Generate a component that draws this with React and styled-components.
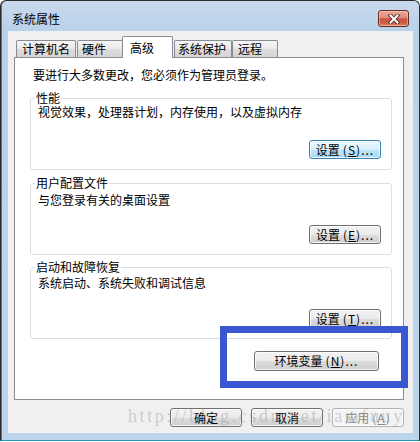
import React from 'react';
import styled, { createGlobalStyle } from 'styled-components';

const GlobalStyle = createGlobalStyle`
  html, body {
    margin: 0;
    padding: 0;
    background: #ffffff;
  }
  body {
    font-family: "Noto Sans CJK SC", "Liberation Sans", sans-serif;
    font-size: 12px;
    color: #000000;
  }
`;

const Window = styled.div`
  position: relative;
  width: 420px;
  height: 441px;
  box-sizing: border-box;
  display: flex;
  flex-direction: column;
  border: 1px solid #2c2c2c;
  border-bottom-color: #2a93b8;
  border-radius: 6px 6px 0 0;
  background: linear-gradient(#c9daed 0, #b9d1ea 30px, #bcd5ed 100%);
  box-shadow: inset 1px 0 0 #5d6f82;
  overflow: hidden;
`;

const TitleBar = styled.div`
  height: 30px;
  display: flex;
  align-items: flex-start;
  justify-content: space-between;
  padding: 0 10px 0 11px;
`;

const Title = styled.div`
  margin-top: 11px;
  line-height: 14px;
  color: #000000;
`;

const CloseButton = styled.div`
  margin-top: 9px;
  width: 31px;
  height: 17px;
  box-sizing: border-box;
  display: flex;
  align-items: center;
  justify-content: center;
  border: 1px solid #6b2a22;
  border-radius: 3px;
  background: linear-gradient(#eaaa9c 0%, #dc8b7b 45%, #c75340 52%, #cc5f48 80%, #e08a6c 100%);
  box-shadow: inset 0 0 0 1px rgba(255, 220, 210, 0.45);
`;

const Client = styled.div`
  height: 402px;
  margin: 0 6px 0 7px;
  box-sizing: border-box;
  padding: 5px 9px 0 6px;
  background: #f0f0f0;
  display: flex;
  flex-direction: column;
`;

const TabStrip = styled.div`
  position: relative;
  z-index: 1;
  height: 22px;
  margin-bottom: -1px;
  padding-left: 2px;
  display: flex;
  align-items: flex-end;
`;

const Tab = styled.div`
  box-sizing: border-box;
  width: ${p => p.$w}px;
  height: ${p => (p.$active ? 22 : 17)}px;
  margin-left: ${p => p.$ml || 0}px;
  margin-bottom: ${p => (p.$active ? 0 : 1)}px;
  padding-left: ${p => p.$pad}px;
  display: flex;
  align-items: center;
  border: 1px solid #898c95;
  border-bottom: none;
  border-radius: 2px 2px 0 0;
  background: ${p => (p.$active ? '#ffffff' : 'linear-gradient(#f6f6f6, #e9e9e9 50%, #dddddd 51%, #d5d5d5)')};
  position: relative;
  z-index: ${p => (p.$active ? 2 : 1)};
  line-height: 14px;
  white-space: nowrap;
  overflow: hidden;
`;

const Panel = styled.div`
  height: 343px;
  box-sizing: border-box;
  border: 1px solid #898c95;
  background: #ffffff;
  padding: 10px 11px 0 15px;
  display: flex;
  flex-direction: column;
`;

const Intro = styled.div`
  margin-left: 3px;
  line-height: 14px;
`;

const Group = styled.fieldset`
  margin: ${p => p.$mt}px 0 0 0;
  padding: 0 10px 10px 7px;
  min-width: 0;
  border: 1px solid #d5dfe5;
  border-radius: 3px;
  display: flex;
  flex-direction: column;
`;

const Legend = styled.legend`
  margin-left: -3px;
  padding: 0 1px;
  line-height: 12px;
`;

const Desc = styled.div`
  margin-top: ${p => p.$mt}px;
  line-height: 14px;
`;

const ButtonRow = styled.div`
  margin-top: ${p => p.$mt}px;
  display: flex;
  justify-content: flex-end;
`;

const Button = styled.button`
  box-sizing: border-box;
  width: ${p => p.$w || 72}px;
  height: ${p => p.$h || 19}px;
  padding: 0;
  font-family: inherit;
  font-size: 12px;
  line-height: 16px;
  color: ${p => (p.disabled ? '#8b8b8b' : '#000000')};
  border: 1px solid ${p => (p.$hot ? '#3c7fb1' : p.disabled ? '#adb2b5' : '#707070')};
  border-radius: 3px;
  background: ${p =>
    p.$hot
      ? 'linear-gradient(#eaf6fd 0%, #d9f0fc 50%, #bee6fd 51%, #a7d9f5 100%)'
      : p.disabled
      ? '#f4f4f4'
      : 'linear-gradient(#f2f2f2 0%, #ebebeb 50%, #dddddd 51%, #cfcfcf 100%)'};
  box-shadow: inset 0 0 0 1px rgba(255, 255, 255, 0.75);
  white-space: nowrap;
`;

const Access = styled.span`
  margin-left: 3px;
  letter-spacing: 1px;

  u {
    text-decoration-thickness: 1px;
    text-underline-offset: 1px;
  }
`;

const EnvRow = styled.div`
  margin: 12px 13px 0 0;
  display: flex;
  justify-content: flex-end;
`;

const Footer = styled.div`
  margin-top: 8px;
  display: flex;
  justify-content: flex-end;
  gap: 9px;
`;

const Watermark = styled.div`
  position: absolute;
  left: 127px;
  top: 405px;
  font-family: "Liberation Serif", serif;
  font-size: 18px;
  letter-spacing: 2.6px;
  color: rgba(140, 140, 140, 0.38);
  white-space: nowrap;
  pointer-events: none;
`;

const Highlight = styled.div`
  position: absolute;
  left: 219px;
  top: 325px;
  width: 188px;
  height: 62px;
  box-sizing: border-box;
  border: 7px solid #3a57d2;
  pointer-events: none;
`;

const tabs = [
  { label: '计算机名', w: 60, ml: 0, pad: 5 },
  { label: '硬件', w: 47, ml: 1, pad: 4 },
  { label: '高级', w: 51, ml: -2, pad: 7, active: true },
  { label: '系统保护', w: 58, ml: 1, pad: 3 },
  { label: '远程', w: 46, ml: 0, pad: 5 },
];

const groups = [
  { title: '性能', desc: '视觉效果，处理器计划，内存使用，以及虚拟内存', key: 'S', hot: true, mt: 10, dmt: 1, bmt: 21 },
  { title: '用户配置文件', desc: '与您登录有关的桌面设置', key: 'E', mt: 7, dmt: 4, bmt: 18 },
  { title: '启动和故障恢复', desc: '系统启动、系统失败和调试信息', key: 'T', mt: 6, dmt: 3, bmt: 19 },
];

const CloseGlyph = () => (
  <svg width="12" height="10" viewBox="0 0 12 10">
    <path d="M2.5 1.5 L9.5 8.5 M9.5 1.5 L2.5 8.5" stroke="#5b2d27" strokeWidth="3.8" strokeLinecap="square" />
    <path d="M2.5 1.5 L9.5 8.5 M9.5 1.5 L2.5 8.5" stroke="#ffffff" strokeWidth="2" strokeLinecap="square" />
  </svg>
);

export default function App() {
  return (
    <>
      <GlobalStyle />
      <Window>
        <TitleBar>
          <Title>系统属性</Title>
          <CloseButton>
            <CloseGlyph />
          </CloseButton>
        </TitleBar>
        <Client>
          <TabStrip>
            {tabs.map(t => (
              <Tab key={t.label} $w={t.w} $ml={t.ml} $pad={t.pad} $active={t.active}>
                {t.label}
              </Tab>
            ))}
          </TabStrip>
          <Panel>
            <Intro>要进行大多数更改，您必须作为管理员登录。</Intro>
            {groups.map(g => (
              <Group key={g.title} $mt={g.mt}>
                <Legend>{g.title}</Legend>
                <Desc $mt={g.dmt}>{g.desc}</Desc>
                <ButtonRow $mt={g.bmt}>
                  <Button $hot={g.hot}>
                    设置<Access>(<u>{g.key}</u>)...</Access>
                  </Button>
                </ButtonRow>
              </Group>
            ))}
            <EnvRow>
              <Button $w={125} $h={20}>
                环境变量<Access>(<u>N</u>)...</Access>
              </Button>
            </EnvRow>
          </Panel>
          <Footer>
            <Button>确定</Button>
            <Button>取消</Button>
            <Button disabled>
              应用<Access>(<u>A</u>)</Access>
            </Button>
          </Footer>
        </Client>
        <Watermark>http://blog.csdn.net/iamfuuy</Watermark>
        <Highlight />
      </Window>
    </>
  );
}
